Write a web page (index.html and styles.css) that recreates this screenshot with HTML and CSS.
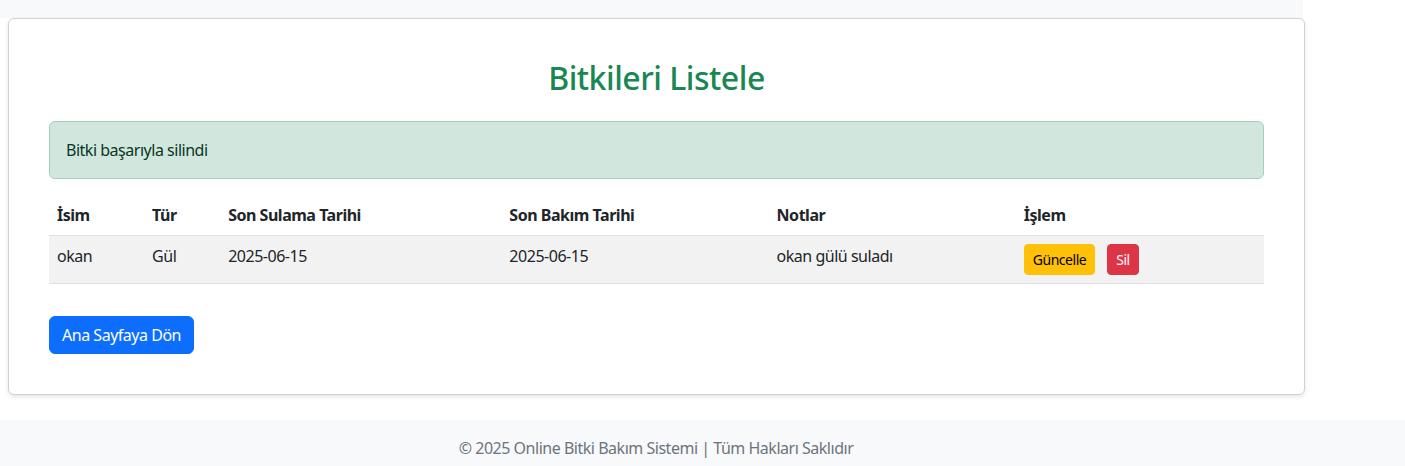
FILE: index.html
```html
<!DOCTYPE html>
<html lang="tr">
<head>
<meta charset="utf-8">
<title>Bitkileri Listele</title>
<link rel="stylesheet" href="styles.css">
</head>
<body>
<div class="topstrip"></div>
<main class="card">
  <h2 class="title">Bitkileri Listele</h2>
  <div class="alert">Bitki başarıyla silindi</div>
  <table class="table">
    <colgroup>
      <col class="c1"><col class="c2"><col class="c3"><col class="c4"><col class="c5"><col class="c6">
    </colgroup>
    <thead>
      <tr><th>İsim</th><th>Tür</th><th>Son Sulama Tarihi</th><th>Son Bakım Tarihi</th><th>Notlar</th><th>İşlem</th></tr>
    </thead>
    <tbody>
      <tr>
        <td>okan</td><td>Gül</td><td>2025-06-15</td><td>2025-06-15</td><td>okan gülü suladı</td>
        <td><div class="actions"><a class="btn btn-sm btn-warning" href="#">Güncelle</a><a class="btn btn-sm btn-danger" href="#">Sil</a></div></td>
      </tr>
    </tbody>
  </table>
  <a class="btn btn-primary" href="#">Ana Sayfaya Dön</a>
</main>
<footer class="footer"><div class="footer-inner">© 2025 Online Bitki Bakım Sistemi | Tüm Hakları Saklıdır</div></footer>
</body>
</html>
```
FILE: styles.css
```css
* { box-sizing: border-box; }
html, body { margin: 0; padding: 0; }
body {
  font-family: "Noto Sans", "Open Sans", sans-serif;
  font-size: 16px;
  line-height: 1.5;
  letter-spacing: -0.03em;
  color: #212529;
  background: #fff;
}
.topstrip {
  height: 18px;
  width: 1303px;
  background: #f8f9fa;
}
.card {
  display: block;
  margin-left: 8px;
  width: 1297px;
  border: 1px solid #cfd2d5;
  border-radius: 6px;
  box-shadow: 0 2px 4px rgba(0,0,0,0.1);
  padding: 40px 40px 40px;
  background: #fff;
}
.title {
  margin: 0 0 24px;
  text-align: center;
  color: #198754;
  font-size: 32px;
  font-weight: 500;
  line-height: 1.2;
}
.alert {
  background: #d1e7dd;
  border: 1px solid #a3cfbb;
  color: #0a3622;
  border-radius: 6px;
  padding: 16px;
  margin-bottom: 16px;
}
.table {
  width: 100%;
  border-collapse: collapse;
  table-layout: fixed;
  margin-bottom: 32px;
}
.c1 { width: 95px; }
.c2 { width: 76px; }
.c3 { width: 281px; }
.c4 { width: 267px; }
.c5 { width: 247px; }
.c6 { width: 248px; }
.table th, .table td {
  padding: 8px;
  text-align: left;
  vertical-align: top;
  border-bottom: 1px solid #dee2e6;
}
.table th { font-weight: 700; }
.table tbody tr { background: #f2f2f2; }
.actions { display: flex; gap: 12px; }
.btn {
  display: inline-block;
  text-decoration: none;
  border-radius: 6px;
  padding: 6px 12px;
  font-size: 16px;
  line-height: 1.5;
  border: 1px solid transparent;
}
.btn-sm {
  padding: 4px 8px;
  font-size: 14px;
  border-radius: 4px;
}
.btn-warning { background: #ffc107; border-color: #ffc107; color: #000; }
.btn-danger { background: #dc3545; border-color: #dc3545; color: #fff; }
.btn-primary { background: #0d6efd; border-color: #0d6efd; color: #fff; }
.footer {
  margin-top: 25px;
  background: #f8f9fa;
  color: #6c757d;
  padding: 16px 0;
}
.footer-inner {
  width: 1312px;
  text-align: center;
}
```
